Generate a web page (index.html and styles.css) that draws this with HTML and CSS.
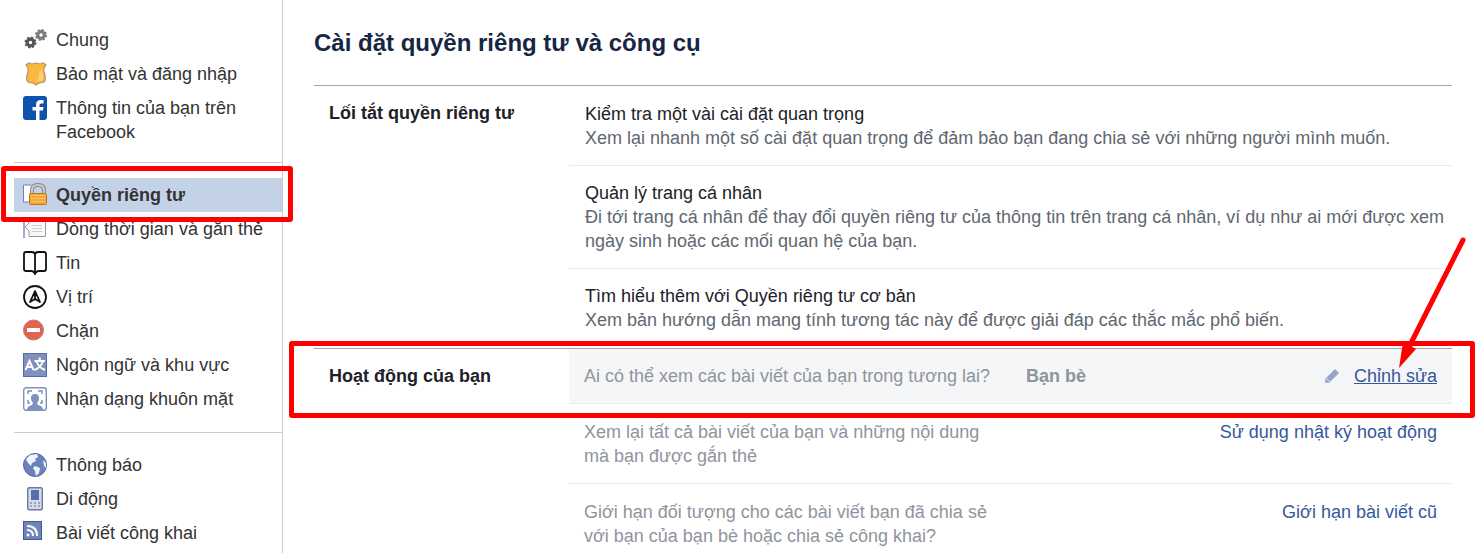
FILE: index.html
```html
<!DOCTYPE html>
<html lang="vi">
<head>
    <meta charset="UTF-8">
    <meta name="viewport" content="width=device-width, initial-scale=1.0">
    <title>Cài đặt quyền riêng tư và công cụ</title>
    <link rel="stylesheet" href="styles.css">
</head>
<body>
    <nav class="sidebar">
        <ul class="menu">
            <li><a href="#">
                <svg class="icon" viewBox="0 0 24 24">
                    <circle cx="7.500" cy="14.500" r="3.300" fill="none" stroke="#555" stroke-width="3.200"/>
                    <circle cx="7.500" cy="14.500" r="5.100" fill="none" stroke="#555" stroke-width="1.800" stroke-dasharray="2.200 1.800"/>
                    <circle cx="18" cy="7" r="3.300" fill="none" stroke="#7c7c7c" stroke-width="3.200"/>
                    <circle cx="18" cy="7" r="5.100" fill="none" stroke="#7c7c7c" stroke-width="1.800" stroke-dasharray="2.200 1.800"/>
                </svg>
                <span>Chung</span>
            </a></li>
            <li><a href="#">
                <svg class="icon" viewBox="0 0 24 24">
                    <path d="M3 3l3-2 3 1 4-1 4 1 3-1 3 2-2 3q-1 3 1 7 1 5-1 7l-4 1q-2 0-4 2-2-2-4-2l-4-1q-2-2-1-7 2-4 1-7z" fill="#fbb93c" stroke="#b3936a" stroke-width="1.200"/>
                    <path d="M13 19q4-3 3-6 0-4 3-6 0 3 1 6 1 4-1 6z" fill="#fdd07c"/>
                </svg>
                <span>Bảo mật và đăng nhập</span>
            </a></li>
            <li><a href="#">
                <svg class="icon" viewBox="0 0 24 24">
                    <rect width="24" height="24" rx="3" fill="#0f52ae"/>
                    <path d="M13 24v-9.500H9.500v-3.500H13V9q0-5 5-5h2.500v3.500H18q-1.500 0-1.500 1.700V11h4l-.600 3.500h-3.400V24z" fill="#fff"/>
                </svg>
                <span>Thông tin của bạn trên Facebook</span>
            </a></li>
        </ul>
        <ul class="menu">
            <li class="active"><a href="#">
                <svg class="icon" viewBox="0 0 24 24">
                    <path d="M8 2H.500v17H8" fill="#fff" stroke="#6b80b5"/>
                    <path d="M9 12V7q0-5 6-5t6 5v5" fill="none" stroke="#888" stroke-width="4"/>
                    <path d="M9 12V7q0-5 6-5t6 5v5" fill="none" stroke="#ccc" stroke-width="2"/>
                    <rect x="6.500" y="10.500" width="17" height="11" rx="1" fill="#f6a83a" stroke="#b57a20"/>
                    <path d="M8 12.500h14M8 15.500h14M8 18.500h14" stroke="#fbc36c"/>
                </svg>
                <span>Quyền riêng tư</span>
            </a></li>
            <li><a href="#">
                <svg class="icon" viewBox="0 0 24 24">
                    <path d="M1 0v21" stroke="#8b98bd" stroke-width="1.600"/>
                    <path d="M6 .500h16.500v19H6V14l-4-4 4-4z" fill="#f8f8f8" stroke="#999"/>
                    <path d="M9 8.500h10M9 11.500h10M9 14.500h10" stroke="#ccc"/>
                </svg>
                <span>Dòng thời gian và gắn thẻ</span>
            </a></li>
            <li><a href="#">
                <svg class="icon" viewBox="0 0 24 24" fill="none" stroke="#111" stroke-width="1.800">
                    <path d="M12 3v19M12 3q-1-2-3-2H3Q1 1 1 3v15q0 2 2 2h5q3 0 4 3 1-3 4-3h5q2 0 2-2V3q0-2-2-2h-6q-2 0-3 2z"/>
                </svg>
                <span>Tin</span>
            </a></li>
            <li><a href="#">
                <svg class="icon" viewBox="0 0 24 24" fill="none" stroke="#111" stroke-width="1.800">
                    <circle cx="12" cy="12" r="11"/>
                    <path d="M12 6L7 17l4-2.500h2L17 17zM12 7v8" stroke-linejoin="round"/>
                </svg>
                <span>Vị trí</span>
            </a></li>
            <li><a href="#">
                <svg class="icon" viewBox="0 0 24 24">
                    <circle cx="10.500" cy="11" r="10" fill="#e1644e" stroke="#cf7568"/>
                    <rect x="4" y="9" width="13" height="4" fill="#fff"/>
                </svg>
                <span>Chặn</span>
            </a></li>
            <li><a href="#">
                <svg class="icon" viewBox="0 0 24 24">
                    <rect x=".500" y=".500" width="23" height="23" fill="#8090bd" stroke="#576ba5"/>
                    <path d="M2.500 17L6.500 8l4 9M4 14h5M11.500 8h10.500M16.700 4.500v3M13.500 8q2 6.500 8.500 9M20 8q-2 6.500-8.500 9" fill="none" stroke="#fff" stroke-width="2"/>
                </svg>
                <span>Ngôn ngữ và khu vực</span>
            </a></li>
            <li><a href="#">
                <svg class="icon" viewBox="0 0 24 24">
                    <rect x=".700" y=".700" width="22.600" height="22.600" rx="2.500" fill="#fff" stroke="#7f92bf" stroke-width="1.400"/>
                    <path d="M4 23q0-4 5-5l1-2q-2-2-2-5 0-4 4-4t4 4q0 3-2 5l1 2q5 1 5 5z" fill="#7f92bf"/>
                    <path d="M5 7V4h4M15 4h4v3M5 13v3h2M19 13v3h-2" fill="none" stroke="#7f92bf" stroke-width="1.500"/>
                </svg>
                <span>Nhận dạng khuôn mặt</span>
            </a></li>
        </ul>
        <ul class="menu">
            <li><a href="#">
                <svg class="icon" viewBox="0 0 24 24">
                    <circle cx="12" cy="12" r="11.500" fill="#6b83b9" stroke="#5068a2"/>
                    <path d="M7 2l7-1 1 3-3 2 1 2-4 2-1 3-3-3-2-4zM12 13l5 2-1 5-3 3-1-5-2-3zM20 7l3 3v5l-2-2z" fill="#f1f4fa"/>
                </svg>
                <span>Thông báo</span>
            </a></li>
            <li><a href="#">
                <svg class="icon" viewBox="0 0 24 24">
                    <rect x="4.700" y=".700" width="14.600" height="22" rx="1.500" fill="#d5dbe8" stroke="#687a9f" stroke-width="1.400"/>
                    <rect x="8" y="3" width="8" height="10" fill="#5870aa"/>
                    <path d="M7 16h10M7 19h10" stroke="#8593b2" stroke-width="1.500" stroke-dasharray="2 2"/>
                </svg>
                <span>Di động</span>
            </a></li>
            <li><a href="#">
                <svg class="icon" viewBox="0 0 24 24">
                    <rect x=".500" y=".500" width="18" height="18" fill="#7084b8" stroke="#40599b"/>
                    <path d="M4 9q6 0 6 6M4 5q10 0 10 10" fill="none" stroke="#fff" stroke-width="2"/>
                    <circle cx="5" cy="14" r="1.500" fill="#fff"/>
                </svg>
                <span>Bài viết công khai</span>
            </a></li>
        </ul>
    </nav>

    <main class="content">
        <h1>Cài đặt quyền riêng tư và công cụ</h1>

        <section class="section shortcuts">
            <h2>Lối tắt quyền riêng tư</h2>
            <ul class="rows">
                <li>
                    <h3>Kiểm tra một vài cài đặt quan trọng</h3>
                    <p>Xem lại nhanh một số cài đặt quan trọng để đảm bảo bạn đang chia sẻ với những người mình muốn.</p>
                </li>
                <li>
                    <h3>Quản lý trang cá nhân</h3>
                    <p>Đi tới trang cá nhân để thay đổi quyền riêng tư của thông tin trên trang cá nhân, ví dụ như ai mới được xem ngày sinh hoặc các mối quan hệ của bạn.</p>
                </li>
                <li>
                    <h3>Tìm hiểu thêm với Quyền riêng tư cơ bản</h3>
                    <p>Xem bản hướng dẫn mang tính tương tác này để được giải đáp các thắc mắc phổ biến.</p>
                </li>
            </ul>
        </section>

        <section class="section activity">
            <h2>Hoạt động của bạn</h2>
            <ul class="rows">
                <li class="current">
                    <span>Ai có thể xem các bài viết của bạn trong tương lai?</span>
                    <strong>Bạn bè</strong>
                    <a class="edit" href="#">
                        <svg class="pencil" viewBox="0 0 16 16">
                            <path d="M1 11L11 1l4 4L5 15H1z" fill="#97a5ca"/>
                            <path d="M1 11l4 4H1z" fill="#a9b4d2"/>
                            <path d="M2 10l4 4" stroke="#dfe4ef"/>
                        </svg>
                        <span>Chỉnh sửa</span>
                    </a>
                </li>
                <li>
                    <span>Xem lại tất cả bài viết của bạn và những nội dung mà bạn được gắn thẻ</span>
                    <a href="#">Sử dụng nhật ký hoạt động</a>
                </li>
                <li>
                    <span>Giới hạn đối tượng cho các bài viết bạn đã chia sẻ với bạn của bạn bè hoặc chia sẻ công khai?</span>
                    <a href="#">Giới hạn bài viết cũ</a>
                </li>
            </ul>
            <svg class="arrow" viewBox="0 0 80 140">
                <path d="M73 8L20 113" stroke="#f00" stroke-width="5" stroke-linecap="round"/>
                <path d="M9 136l4-26 13 7z" fill="#f00"/>
            </svg>
        </section>
    </main>
</body>
</html>
```
FILE: styles.css
```css
*, *::after {
    margin: 0;
    padding: 0;
    box-sizing: border-box;
}
body {
    display: flex;
    min-height: 100vh;
    background: #fff;
    font-family: "Liberation Sans", Arial, sans-serif;
    font-size: 18px;
    line-height: 24px;
    color: #1d2129;
}
ul {
    list-style: none;
}
a {
    color: #365899;
    text-decoration: none;
}

/* sidebar */
.sidebar {
    flex: 0 0 269px;
    margin-left: 14px;
    padding-top: 8px;
    border-right: 1px solid #ccc;
}
.menu {
    padding: 15px 0 16px;
}
.menu + .menu {
    border-top: 1px solid #ccc;
}
.menu:first-child {
    padding-bottom: 13px;
}
.menu a {
    display: flex;
    gap: 9px;
    padding: 5px 9px;
    color: #333;
}
.icon {
    flex: none;
    width: 24px;
    height: 24px;
}
.active {
    position: relative;
    background: #c4d2e7;
    font-weight: bold;
}
/* red frames */
.active::after,
.activity::after {
    content: "";
    position: absolute;
    z-index: 1;
    border: 5px solid #f00;
    border-radius: 3px;
    pointer-events: none;
}
.active::after {
    inset: -12px -11px -10px -13px;
}
.activity::after {
    top: -8px;
    left: -25px;
    right: -23px;
    height: 77px;
}

/* content */
.content {
    flex: 1;
    padding: 27px 31px 0;
}
h1 {
    margin-bottom: 26px;
    font-size: 24px;
    line-height: 32px;
    color: #162643;
}
.section {
    display: grid;
    grid-template-columns: 255px 1fr;
    border-top: 1px solid #a5a6aa;
}
h2 {
    padding: 15px;
    font-size: 18px;
}
h3 {
    font-size: 18px;
    font-weight: normal;
}
.rows li {
    padding: 16px 15px 15px;
    border-bottom: 1px solid #e9ebee;
}
.shortcuts .rows {
    padding: 1px 0;
}
.shortcuts .rows li {
    padding: 15px 0 15px 16px;
}
.shortcuts .rows li:last-child {
    border-bottom: none;
}
.shortcuts p {
    color: #606770;
}
.activity {
    position: relative;
}
.activity li {
    display: grid;
    grid-template-columns: 416px 1fr auto;
    column-gap: 26px;
    color: #90949c;
}
.activity li a {
    grid-column: 3;
}
.activity .current {
    padding-top: 15px;
    background: #f5f6f7;
}
.edit {
    display: flex;
    align-items: center;
    gap: 14px;
}
.edit span {
    text-decoration: underline;
}
.pencil {
    width: 16px;
    height: 16px;
}
.arrow {
    position: absolute;
    z-index: 2;
    top: -117px;
    right: -18px;
    width: 80px;
    height: 140px;
    pointer-events: none;
}
```
